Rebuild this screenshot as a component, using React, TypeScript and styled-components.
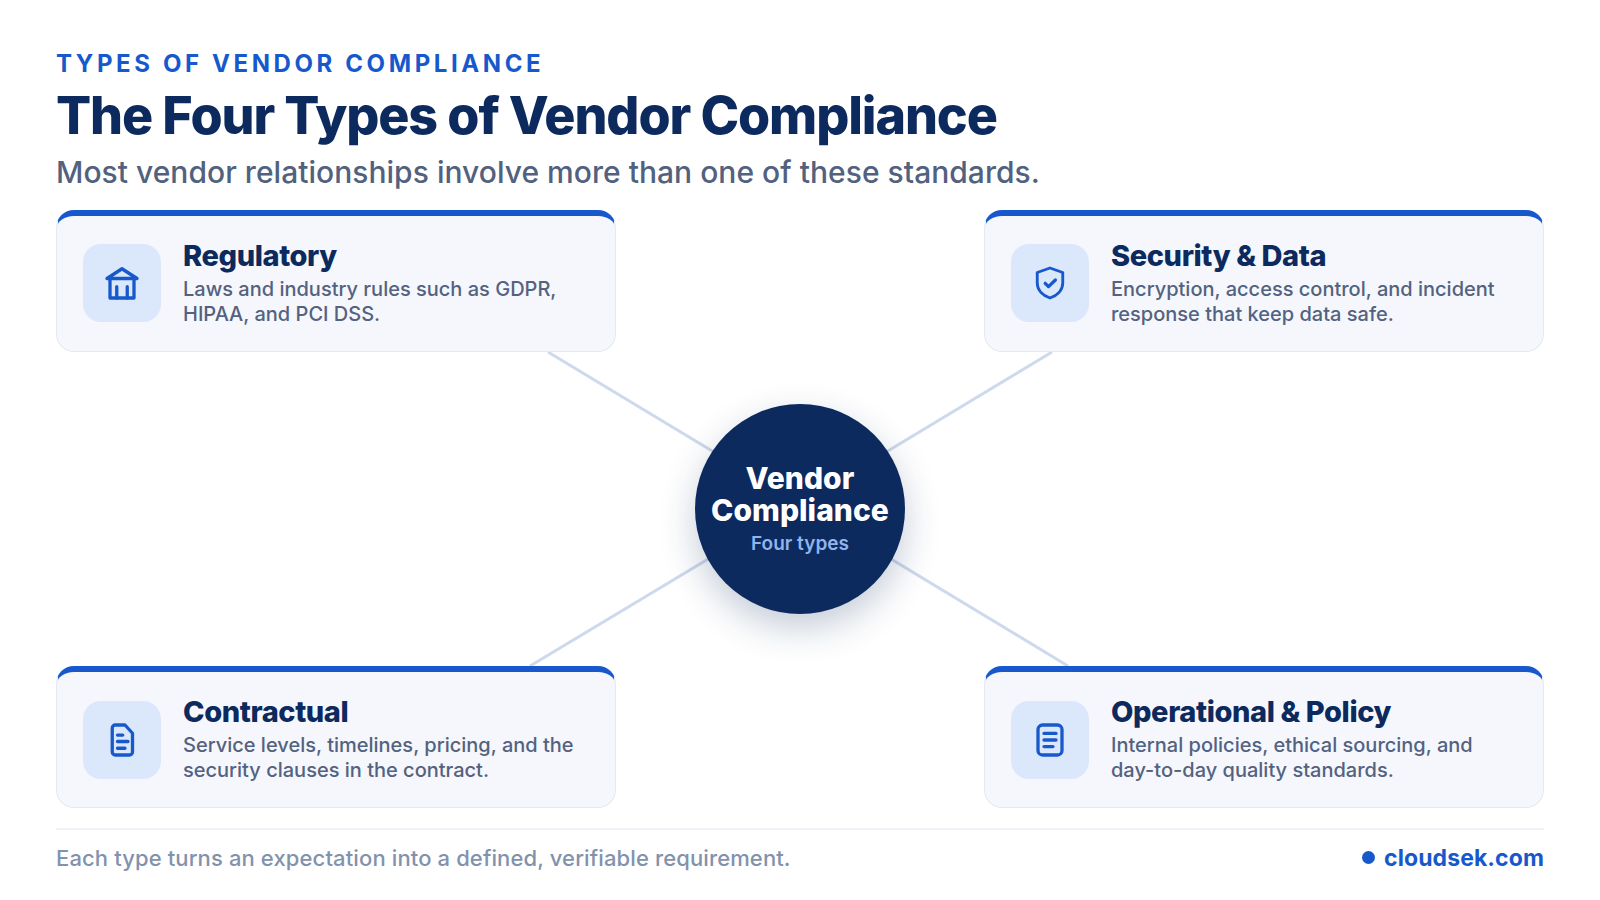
import React from "react";
import styled, { createGlobalStyle } from "styled-components";

const Global = createGlobalStyle`
  html, body { margin: 0; padding: 0; background: #fff; }
  body { font-family: Inter, "Liberation Sans", sans-serif; }
  * { box-sizing: border-box; }
`;

const Page = styled.main`
  width: 1600px;
  height: 900px;
  padding: 49px 56px 0;
  display: flex;
  flex-direction: column;
  background: #fff;
`;

const Eyebrow = styled.div`
  font-size: 24px;
  line-height: 30px;
  font-weight: 700;
  letter-spacing: 3.6px;
  color: #1759cd;
`;

const Title = styled.h1`
  margin: 6px 0 0;
  font-size: 52px;
  line-height: 62px;
  font-weight: 800;
  letter-spacing: -1.12px;
  color: #0c2a5e;
`;

const Subtitle = styled.p`
  margin: 5px 0 0;
  font-size: 30px;
  line-height: 40px;
  font-weight: 500;
  letter-spacing: 0.03px;
  color: #52617e;
`;

const Diagram = styled.section`
  position: relative;
  margin-top: 18px;
  height: 598.3px;
  display: grid;
  grid-template-columns: 560px 560px;
  grid-template-rows: 142px 142px;
  justify-content: space-between;
  align-content: space-between;
`;

const Lines = styled.svg`
  position: absolute;
  inset: 0;
  width: 100%;
  height: 100%;
`;

const Card = styled.article`
  position: relative;
  z-index: 1;
  display: flex;
  align-items: center;
  gap: 22px;
  padding: 0 26px 0.2px;
  background: #f5f7fc;
  border: 1px solid #e4e9f3;
  border-top: 6px solid #1759cd;
  border-radius: 18px;
`;

const IconTile = styled.div`
  flex: none;
  width: 78px;
  height: 78px;
  border-radius: 18px;
  background: #dbe7fb;
  display: flex;
  align-items: center;
  justify-content: center;
  color: #1759cd;
`;

const CardText = styled.div`
  min-width: 0;
  padding-top: 1px;
  margin-bottom: 1.8px;
`;

const CardTitle = styled.h2`
  margin: 0 0 4px;
  font-size: 29px;
  line-height: 34px;
  font-weight: 800;
  letter-spacing: -0.4px;
  color: #0c2a5e;
`;

const CardBody = styled.p`
  margin: 0;
  font-size: 20px;
  line-height: 25px;
  font-weight: 500;
  color: #536280;
`;

const Hub = styled.div`
  position: absolute;
  z-index: 2;
  left: 639px;
  top: 194px;
  width: 210px;
  height: 210px;
  border-radius: 50%;
  background: #0c2a5e;
  box-shadow: 0 14px 36px rgba(12, 42, 94, 0.24);
  display: flex;
  flex-direction: column;
  align-items: center;
  justify-content: center;
  text-align: center;
`;

const HubTitle = styled.div`
  font-size: 30px;
  line-height: 32px;
  font-weight: 800;
  letter-spacing: 0.05px;
  color: #fff;
`;

const HubSub = styled.div`
  margin-top: 5px;
  font-size: 19px;
  line-height: 26px;
  font-weight: 600;
  color: #8fb4ee;
`;

const Footer = styled.footer`
  margin-top: 19.7px;
  padding-top: 13px;
  border-top: 2px solid #eef1f6;
  display: flex;
  align-items: center;
  justify-content: space-between;
`;

const FooterNote = styled.span`
  font-size: 22px;
  line-height: 30px;
  font-weight: 500;
  letter-spacing: 0.12px;
  color: #8292ad;
`;

const Brand = styled.span`
  display: flex;
  align-items: center;
  gap: 9px;
  font-size: 23px;
  line-height: 30px;
  font-weight: 700;
  letter-spacing: 0.08px;
  color: #1759cd;
`;

const BrandDot = styled.span`
  width: 13px;
  height: 13px;
  border-radius: 50%;
  background: #1759cd;
`;

const Icon: React.FC<{ children: React.ReactNode }> = ({ children }) => (
  <svg width="36" height="36" viewBox="0 0 24 24" fill="none" stroke="currentColor" strokeWidth="2.2" strokeLinecap="round" strokeLinejoin="round">
    {children}
  </svg>
);

const cards = [
  {
    title: "Regulatory",
    body: ["Laws and industry rules such as GDPR,", "HIPAA, and PCI DSS."],
    icon: <><path d="M2 9 L12 2.5 L22 9 Z" /><path d="M4 9 V22 H20 V9" /><path d="M8.5 22 V14.5 M15.5 22 V14.5" /></>,
  },
  {
    title: "Security & Data",
    body: ["Encryption, access control, and incident", "response that keep data safe."],
    icon: <><path d="M12 2 L20.5 5 V12 C20.5 17 16.5 20.5 12 22 C7.5 20.5 3.5 17 3.5 12 V5 Z" strokeWidth="1.9" /><path d="M8.8 12.2 L11 14.4 L15.6 10" /></>,
  },
  {
    title: "Contractual",
    body: ["Service levels, timelines, pricing, and the", "security clauses in the contract."],
    icon: <><path d="M7.5 2 H14 L19 7.5 V20 A2 2 0 0 1 17 22 H7.5 A2 2 0 0 1 5.5 20 V4 A2 2 0 0 1 7.5 2 Z" /><path d="M9 8.7 H12.5 M9 13 H16 M9 17.5 H14" /></>,
  },
  {
    title: "Operational & Policy",
    body: ["Internal policies, ethical sourcing, and", "day-to-day quality standards."],
    icon: <><rect x="4" y="2" width="16" height="20" rx="3" /><path d="M8 7.6 H16 M8 12 H16 M8 16.4 H14" /></>,
  },
];

export default function App() {
  return (
    <Page>
      <Global />
      <Eyebrow>TYPES OF VENDOR COMPLIANCE</Eyebrow>
      <Title>The Four Types of Vendor Compliance</Title>
      <Subtitle>Most vendor relationships involve more than one of these standards.</Subtitle>
      <Diagram>
        <Lines viewBox="0 0 1488 598.3" aria-hidden="true">
          <g stroke="#cdd9ec" strokeWidth="3">
            <line x1="744" y1="294" x2="492" y2="142" />
            <line x1="744" y1="294" x2="996" y2="142" />
            <line x1="744" y1="294" x2="474" y2="456" />
            <line x1="744" y1="294" x2="1012" y2="456" />
          </g>
        </Lines>
        {cards.map((c) => (
          <Card key={c.title}>
            <IconTile><Icon>{c.icon}</Icon></IconTile>
            <CardText>
              <CardTitle>{c.title}</CardTitle>
              <CardBody>{c.body[0]}<br />{c.body[1]}</CardBody>
            </CardText>
          </Card>
        ))}
        <Hub>
          <HubTitle>Vendor<br />Compliance</HubTitle>
          <HubSub>Four types</HubSub>
        </Hub>
      </Diagram>
      <Footer>
        <FooterNote>Each type turns an expectation into a defined, verifiable requirement.</FooterNote>
        <Brand><BrandDot />cloudsek.com</Brand>
      </Footer>
    </Page>
  );
}
